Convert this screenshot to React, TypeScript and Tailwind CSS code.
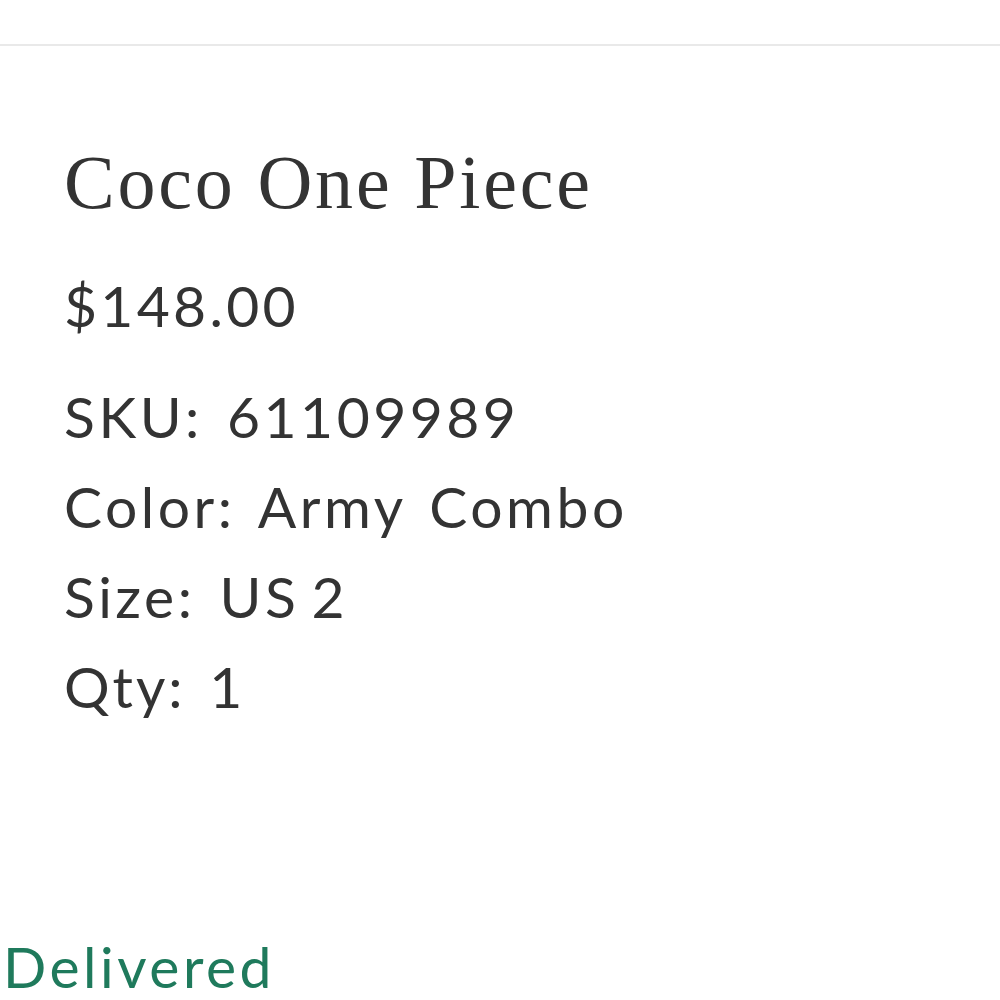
export default function App() {
  const lato = { fontFamily: "Lato, 'Open Sans', sans-serif" };
  return (
    <div className="w-[1000px] h-[1000px] bg-white overflow-hidden" style={lato}>
      <div className="h-[44px]" />
      <div className="h-[2px] bg-[#e9e9e9]" />
      <div className="pl-[64px] pt-[98px]">
        <h1
          className="text-[76px] leading-[76px] tracking-[2.8px] text-[#333333] font-normal"
          style={{ fontFamily: "'Liberation Serif', 'DejaVu Serif', serif" }}
        >
          Coco One Piece
        </h1>
        <div className="mt-[40px] text-[57px] leading-[90px] tracking-[3.3px] text-[#333333]">$148.00</div>
        <div className="mt-[21px] text-[57px] leading-[90px] tracking-[3.5px] text-[#333333] [word-spacing:6px]">
          <div>SKU: 61109989</div>
          <div>Color: Army Combo</div>
          <div>
            Size: <span className="[word-spacing:-6px]">US 2</span>
          </div>
          <div className="tracking-[3px]">Qty: 1</div>
        </div>
      </div>
      <div className="mt-[190px] pl-[3px] text-[57px] leading-[90px] tracking-[3.5px] text-[#1f7a5c]">Delivered</div>
    </div>
  );
}
